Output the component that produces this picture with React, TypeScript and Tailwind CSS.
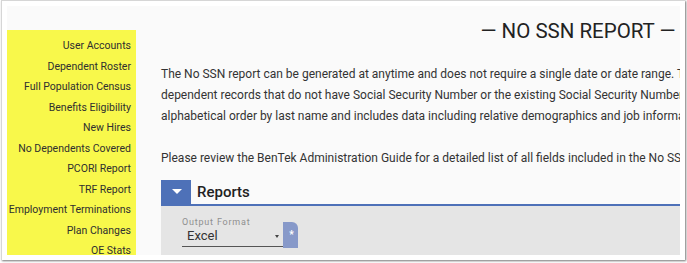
import React from 'react';

const reportLinks = [
  'User Accounts',
  'Dependent Roster',
  'Full Population Census',
  'Benefits Eligibility',
  'New Hires',
  'No Dependents Covered',
  'PCORI Report',
  'TRF Report',
  'Employment Terminations',
  'Plan Changes',
  'OE Stats',
];

const App: React.FC = () => {
  return (
    <div className="w-[687px] h-[263px] bg-white overflow-hidden font-['Roboto',sans-serif] text-[#333]">
      <div className="ml-[1px] w-[684px] h-[260px] border-l border-t border-[#d6d6d6] bg-white pl-[5px] pt-[5px] pr-[5px] pb-[5px] shadow-[1px_1px_2px_rgba(0,0,0,0.55)]">
        <div className="flex h-full bg-[#fafafa] overflow-hidden">
          {/* Sidebar */}
          <div className="w-[129px] shrink-0 pt-[24px] flex flex-col">
            <div className="flex-1 bg-[#f8f84b] pt-[6px] pr-[5px] text-right text-[10.5px] leading-[20.5px] text-[#2f2f2f] overflow-hidden">
              {reportLinks.map((link) => (
                <div key={link} className="whitespace-nowrap">
                  {link}
                </div>
              ))}
            </div>
          </div>

          {/* Main */}
          <div className="flex-1 overflow-hidden pl-[25px]">
            <div className="w-[834px]">
              <h1 className="pt-[14px] text-center text-[20.5px] leading-[23px] font-normal text-[#222] whitespace-nowrap">
                — NO SSN REPORT —
              </h1>

              <div className="mt-[21px] text-[12px] leading-[21px] text-[#333] whitespace-nowrap">
                <p>The No SSN report can be generated at anytime and does not require a single date or date range. This report lists all employee and</p>
                <p>dependent records that do not have Social Security Number or the existing Social Security Number is invalid. Records are sorted in</p>
                <p>alphabetical order by last name and includes data including relative demographics and job information.</p>
                <p className="mt-[21px]">Please review the BenTek Administration Guide for a detailed list of all fields included in the No SSN Report.</p>
              </div>

              {/* Reports section */}
              <div className="mt-[11px]">
                <div className="flex h-[26px] border-b-2 border-[#4e71b8]">
                  <div className="w-[30px] h-full bg-[#4e71b8] flex items-center justify-center pl-[2px] pb-[1px]">
                    <div className="w-0 h-0 border-l-[5px] border-r-[5px] border-t-[5px] border-l-transparent border-r-transparent border-t-white" />
                  </div>
                  <div className="ml-[6px] text-[15px] leading-[24px] font-medium text-[#222]">Reports</div>
                </div>
                <div className="bg-[#e5e5e5] h-[60px] pt-[11px] pl-[21px] flex items-start">
                  <div className="w-[101px] border-b border-[#555] pb-[2px]">
                    <div className="text-[9px] leading-[11px] tracking-[0.8px] text-[#8f8f8f]">Output Format</div>
                    <div className="flex items-center justify-between pl-[5px] pr-[4px] text-[13px] leading-[16px] text-[#333]">
                      <span>Excel</span>
                      <span className="w-0 h-0 border-l-[2.5px] border-r-[2.5px] border-t-[3px] border-l-transparent border-r-transparent border-t-[#444]" />
                    </div>
                  </div>
                  <div className="mt-[5px] w-[15px] h-[26px] bg-[#8799c9] rounded-tr-[6px] flex items-center justify-center pl-[2px] text-white text-[10px] font-bold leading-none">
                    *
                  </div>
                </div>
              </div>
            </div>
          </div>
        </div>
      </div>
    </div>
  );
};

export default App;
